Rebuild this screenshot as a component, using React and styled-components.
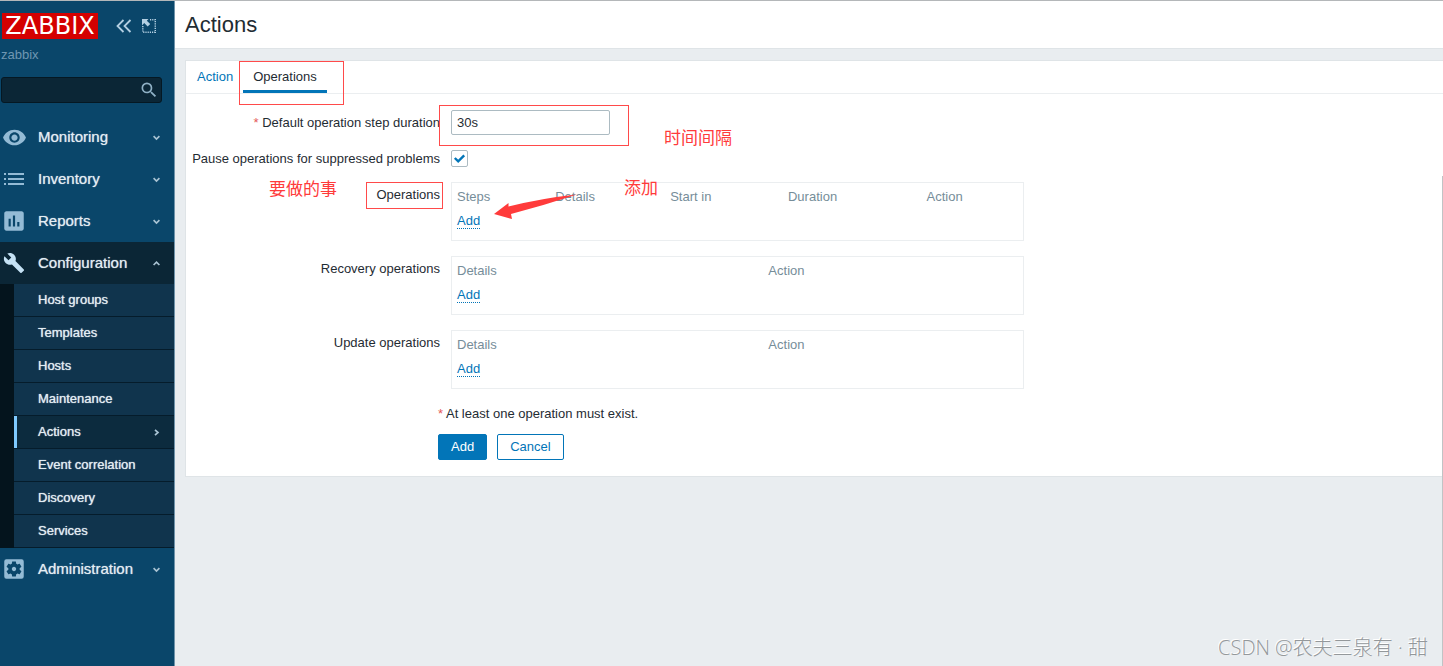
import React from 'react'
import styled, { createGlobalStyle } from 'styled-components'
import { MdVisibility, MdAssessment, MdBuild, MdSettingsApplications, MdSearch } from 'react-icons/md'

const GlobalStyle = createGlobalStyle`
  * {
    box-sizing: border-box;
  }
  body {
    margin: 0;
    background: #e9edf0;
    color: #1f2c33;
    font-family: 'Liberation Sans', Arial, 'Noto Sans CJK SC', sans-serif;
    font-size: 13px;
    line-height: 16px;
  }
`

const PageStyle = styled.div`
  position: relative;
  display: flex;
  min-height: 100vh;
  border-top: 1px solid #b4b7b9;
  overflow: hidden;
`

/* sidebar */

const SidebarStyle = styled.aside`
  flex: none;
  width: 175px;
  background: #0a466a;
  border-right: 1px solid #6f93aa;
`

const SidebarHeaderStyle = styled.div`
  display: flex;
  align-items: center;
  height: 48px;
  padding: 1px 0 0 2px;
  color: #b3cfe2;
`

const LogoStyle = styled.a`
  width: 96px;
  margin-right: 18px;
  background: #d40000;
  color: #fff;
  font-family: 'DejaVu Sans', sans-serif;
  font-size: 24px;
  line-height: 26px;
  text-align: center;
  text-decoration: none;
`

const IconButtonStyle = styled.button`
  display: flex;
  margin-right: 10px;
  padding: 0;
  border: 0;
  background: none;
  color: inherit;
`

const ServerNameStyle = styled.div`
  padding-left: 1px;
  line-height: 12px;
  color: #6f97b2;
`

const SearchStyle = styled.form`
  display: flex;
  align-items: center;
  width: 161px;
  height: 26px;
  margin: 16px 0 13px 1px;
  padding-right: 2px;
  background: #0b2636;
  border: 1px solid #051823;
  border-radius: 3px;
  color: #8fb0c5;
`

const SearchInputStyle = styled.input`
  flex: 1;
  min-width: 0;
  padding: 0 6px;
  border: 0;
  outline: 0;
  background: none;
  color: #fff;
`

const MenuStyle = styled.ul`
  margin: 0;
  padding: 0;
  list-style: none;
`

const MenuLinkStyle = styled.a`
  display: flex;
  align-items: center;
  height: 42px;
  padding-right: 14px;
  background: ${({ $open }) => ($open ? '#0b2636' : 'none')};
  color: #e4edf3;
  font-size: 15px;
  text-decoration: none;
  text-shadow: 0 0 1px #b3c6d3;
`

const MenuIconStyle = styled.span`
  display: flex;
  justify-content: center;
  width: 28px;
  margin-right: 10px;
  color: ${({ $open }) => ($open ? '#c5e2f5' : '#94bbd5')};
`

const MenuTitleStyle = styled.span`
  flex: 1;
`

const SubmenuStyle = styled(MenuStyle)`
  padding-left: 14px;
  background: #04141d;
`

const SubmenuLinkStyle = styled.a`
  display: flex;
  align-items: center;
  height: 33px;
  padding: 0 14px 0 24px;
  background: ${({ $selected }) => ($selected ? '#0c2b3e' : '#10344d')};
  border-bottom: 1px solid #051c2b;
  box-shadow: ${({ $selected }) => ($selected ? 'inset 3px 0 #7fcaff' : 'none')};
  color: #e4edf3;
  font-size: 13px;
  text-decoration: none;
  text-shadow: 0 0 1px #d5e2ea;
`

/* content */

const MainStyle = styled.main`
  flex: 1;
  min-width: 0;
`

const PageHeaderStyle = styled.header`
  display: flex;
  align-items: center;
  height: 48px;
  padding-left: 10px;
  background: #fff;
  border-bottom: 1px solid #dfe4e7;
`

const PageTitleStyle = styled.h1`
  margin: 0;
  font-size: 22px;
  font-weight: normal;
  line-height: 28px;
`

const PanelStyle = styled.form`
  margin: 11px 0 0 10px;
  padding-bottom: 16px;
  background: #fff;
  border: 1px solid #dfe4e7;
  border-right: 0;
`

const TabsStyle = styled.nav`
  display: flex;
  height: 33px;
  padding-left: 1px;
  border-bottom: 1px solid #ebeef0;
`

const TabStyle = styled.a`
  padding: 8px 10px 0;
  border-bottom: 3px solid ${({ $active }) => ($active ? '#0275b8' : 'transparent')};
  color: ${({ $active }) => ($active ? '#1f2c33' : '#0275b8')};
  text-decoration: none;
`

const FormGridStyle = styled.div`
  display: grid;
  grid-template-columns: 254px minmax(0, 573px);
  column-gap: 11px;
  row-gap: 15px;
  padding-top: 16px;
`

const LabelStyle = styled.label`
  padding-top: ${({ $offset = 5 }) => $offset}px;
  text-align: right;
  white-space: nowrap;
`

const RequiredStyle = styled.span`
  color: #e45959;
`

const TextInputStyle = styled.input`
  width: 159px;
  height: 25px;
  padding: 0 5px;
  border: 1px solid #acbbc2;
  border-radius: 2px;
  color: #1f2c33;
  font: inherit;
`

const CheckboxWrapStyle = styled.span`
  display: grid;
  width: 17px;
  height: 17px;

  input,
  svg {
    grid-area: 1 / 1;
  }
  svg {
    pointer-events: none;
  }
`

const CheckboxStyle = styled.input`
  appearance: none;
  width: 17px;
  height: 17px;
  margin: 0;
  background: #fff;
  border: 1px solid #acbbc2;
  border-radius: 2px;
`

const TableBoxStyle = styled.div`
  height: 59px;
  padding: 2px 5px;
  border: 1px solid #ebeef0;
`

const TableStyle = styled.table`
  width: 100%;
  border-collapse: collapse;
  table-layout: fixed;

  th,
  td {
    height: 24px;
    padding: 0;
    text-align: left;
    font-weight: normal;
  }
  th {
    color: #768d99;
  }
`

const LinkButtonStyle = styled.button`
  padding: 0;
  border: 0;
  border-bottom: 1px dotted #0275b8;
  background: none;
  color: #0275b8;
  font: inherit;
  line-height: 15px;
`

const FooterStyle = styled.div`
  padding: 17px 0 0 252px;
`

const ButtonsStyle = styled.div`
  display: flex;
  gap: 10px;
  margin-top: 12px;
`

const ButtonStyle = styled.button`
  height: 26px;
  padding: 0 12px;
  background: ${({ $alt }) => ($alt ? '#fff' : '#0275b8')};
  border: 1px solid #0275b8;
  border-radius: 2px;
  color: ${({ $alt }) => ($alt ? '#0275b8' : '#fff')};
  font: inherit;
`

/* notes drawn over the page */

const FrameStyle = styled.div`
  position: absolute;
  left: ${({ $x }) => $x}px;
  top: ${({ $y }) => $y}px;
  width: ${({ $w }) => $w}px;
  height: ${({ $h }) => $h}px;
  border: 1px solid #ff4a4a;
  pointer-events: none;
`

const NoteStyle = styled.span`
  position: absolute;
  left: ${({ $x }) => $x}px;
  top: ${({ $y }) => $y}px;
  color: #ff3b3b;
  font-family: 'Noto Sans CJK SC', sans-serif;
  font-size: 17px;
  line-height: 24px;
  pointer-events: none;
`

const ArrowStyle = styled.svg`
  position: absolute;
  left: 493px;
  top: 191px;
  pointer-events: none;
`

const WatermarkStyle = styled.span`
  position: absolute;
  right: 15px;
  bottom: 5px;
  color: #94989b;
  font-family: 'Open Sans', 'Noto Sans CJK SC', sans-serif;
  font-size: 20px;
  font-weight: 300;
  line-height: 26px;
  text-shadow: -1px -1px 0 #fff;
`

const ScrollEdgeStyle = styled.div`
  position: absolute;
  top: 175px;
  right: 0;
  bottom: 0;
  width: 1px;
  background: #c1c3c5;
`

const ListIcon = () => (
  <svg width="20" height="12" viewBox="0 0 20 12" fill="currentColor">
    {[0, 5, 10].map(y => (
      <React.Fragment key={y}>
        <rect x="0" y={y} width="2" height="2" />
        <rect x="4" y={y} width="16" height="2" />
      </React.Fragment>
    ))}
  </svg>
)

const CollapseIcon = () => (
  <svg width="16" height="14" viewBox="0 0 16 14" fill="none" stroke="currentColor" strokeWidth="1.8">
    <path d="M7.5 1 1.5 7l6 6M14.5 1l-6 6 6 6" />
  </svg>
)

const KioskIcon = () => (
  <svg width="14" height="14" viewBox="0 0 14 14" fill="none" stroke="currentColor">
    <path d="M8 .8h5.3v12.4H.8V7" strokeWidth="1.5" strokeDasharray="1.2 1" />
    <path d="M0 0h6.5L4.8 1.7l3.4 3.4-2.5 2.5-3.5-3.5L0 6.5z" fill="currentColor" stroke="none" />
  </svg>
)

const ChevronIcon = ({ up = false, right = false }) => (
  <svg width="7" height="7" viewBox="0 0 7 7" fill="none" stroke="#a9c3d3" strokeWidth="1.7">
    <path d={right ? 'M2 .8l3 2.7-3 2.7' : up ? 'M.6 5l2.9-2.8L6.4 5' : 'M.6 2.2l2.9 2.8 2.9-2.8'} />
  </svg>
)

const submenu = [
  'Host groups',
  'Templates',
  'Hosts',
  'Maintenance',
  'Actions',
  'Event correlation',
  'Discovery',
  'Services'
]

const menu = [
  { title: 'Monitoring', icon: <MdVisibility size={25} /> },
  { title: 'Inventory', icon: <ListIcon /> },
  { title: 'Reports', icon: <MdAssessment size={26} /> },
  { title: 'Configuration', icon: <MdBuild size={22} />, items: submenu },
  { title: 'Administration', icon: <MdSettingsApplications size={26} /> }
]

const tables = [
  {
    label: 'Operations',
    columns: [
      ['Steps', '17.5%'],
      ['Details', '20.5%'],
      ['Start in', '21%'],
      ['Duration', '24.7%'],
      ['Action', 'auto']
    ]
  },
  { label: 'Recovery operations', columns: [['Details', '55.5%'], ['Action', 'auto']] },
  { label: 'Update operations', columns: [['Details', '55.5%'], ['Action', 'auto']] }
]

const Sidebar = () => (
  <SidebarStyle>
    <SidebarHeaderStyle>
      <LogoStyle href="#">ZABBIX</LogoStyle>
      <IconButtonStyle type="button" aria-label="Collapse sidebar">
        <CollapseIcon />
      </IconButtonStyle>
      <IconButtonStyle type="button" aria-label="Hide sidebar">
        <KioskIcon />
      </IconButtonStyle>
    </SidebarHeaderStyle>
    <ServerNameStyle>zabbix</ServerNameStyle>
    <SearchStyle>
      <SearchInputStyle type="text" aria-label="Search" />
      <MdSearch size={20} />
    </SearchStyle>
    <MenuStyle>
      {menu.map(({ title, icon, items }) => (
        <li key={title}>
          <MenuLinkStyle href="#" $open={!!items}>
            <MenuIconStyle $open={!!items}>{icon}</MenuIconStyle>
            <MenuTitleStyle>{title}</MenuTitleStyle>
            <ChevronIcon up={!!items} />
          </MenuLinkStyle>
          {!!items && (
            <SubmenuStyle>
              {items.map(item => (
                <li key={item}>
                  <SubmenuLinkStyle href="#" $selected={item === 'Actions'}>
                    <MenuTitleStyle>{item}</MenuTitleStyle>
                    {item === 'Actions' && <ChevronIcon right />}
                  </SubmenuLinkStyle>
                </li>
              ))}
            </SubmenuStyle>
          )}
        </li>
      ))}
    </MenuStyle>
  </SidebarStyle>
)

const OperationsTable = ({ label, columns }) => (
  <>
    <LabelStyle as="span">{label}</LabelStyle>
    <TableBoxStyle>
      <TableStyle aria-label={label}>
        <colgroup>
          {columns.map(([title, width]) => (
            <col key={title} width={width} />
          ))}
        </colgroup>
        <thead>
          <tr>
            {columns.map(([title]) => (
              <th key={title}>{title}</th>
            ))}
          </tr>
        </thead>
        <tbody>
          <tr>
            <td colSpan={columns.length}>
              <LinkButtonStyle type="button">Add</LinkButtonStyle>
            </td>
          </tr>
        </tbody>
      </TableStyle>
    </TableBoxStyle>
  </>
)

export default () => (
  <PageStyle>
    <GlobalStyle />
    <Sidebar />
    <MainStyle>
      <PageHeaderStyle>
        <PageTitleStyle>Actions</PageTitleStyle>
      </PageHeaderStyle>
      <PanelStyle>
        <TabsStyle>
          <TabStyle href="#">Action</TabStyle>
          <TabStyle href="#" $active>
            Operations
          </TabStyle>
        </TabsStyle>
        <FormGridStyle>
          <LabelStyle htmlFor="esc_period">
            <RequiredStyle>*</RequiredStyle> Default operation step duration
          </LabelStyle>
          <TextInputStyle id="esc_period" type="text" defaultValue="30s" />
          <LabelStyle htmlFor="pause_suppressed" $offset={1}>
            Pause operations for suppressed problems
          </LabelStyle>
          <CheckboxWrapStyle>
            <CheckboxStyle id="pause_suppressed" type="checkbox" defaultChecked />
            <svg width="17" height="17" viewBox="0 0 17 17" fill="none" stroke="#0275b8" strokeWidth="2.4">
              <path d="M3.8 8l3.4 3.3 6-6" />
            </svg>
          </CheckboxWrapStyle>
          {tables.map(table => (
            <OperationsTable key={table.label} {...table} />
          ))}
        </FormGridStyle>
        <FooterStyle>
          <RequiredStyle>*</RequiredStyle> At least one operation must exist.
          <ButtonsStyle>
            <ButtonStyle type="button">Add</ButtonStyle>
            <ButtonStyle type="button" $alt>
              Cancel
            </ButtonStyle>
          </ButtonsStyle>
        </FooterStyle>
      </PanelStyle>
    </MainStyle>
    <FrameStyle $x={239} $y={60} $w={105} $h={44} />
    <FrameStyle $x={439} $y={104} $w={190} $h={41} />
    <FrameStyle $x={366} $y={181} $w={77} $h={27} />
    <NoteStyle $x={664} $y={124}>时间间隔</NoteStyle>
    <NoteStyle $x={269} $y={175}>要做的事</NoteStyle>
    <NoteStyle $x={624} $y={174}>添加</NoteStyle>
    <ArrowStyle width="90" height="30" viewBox="0 0 90 30" fill="#ff3b3b">
      <path d="M1 22 15.500 11v3.500Q50 6 84 2.500 52 13 18 22l1 5z" />
    </ArrowStyle>
    <WatermarkStyle>CSDN @农夫三泉有 · 甜</WatermarkStyle>
    <ScrollEdgeStyle />
  </PageStyle>
)
